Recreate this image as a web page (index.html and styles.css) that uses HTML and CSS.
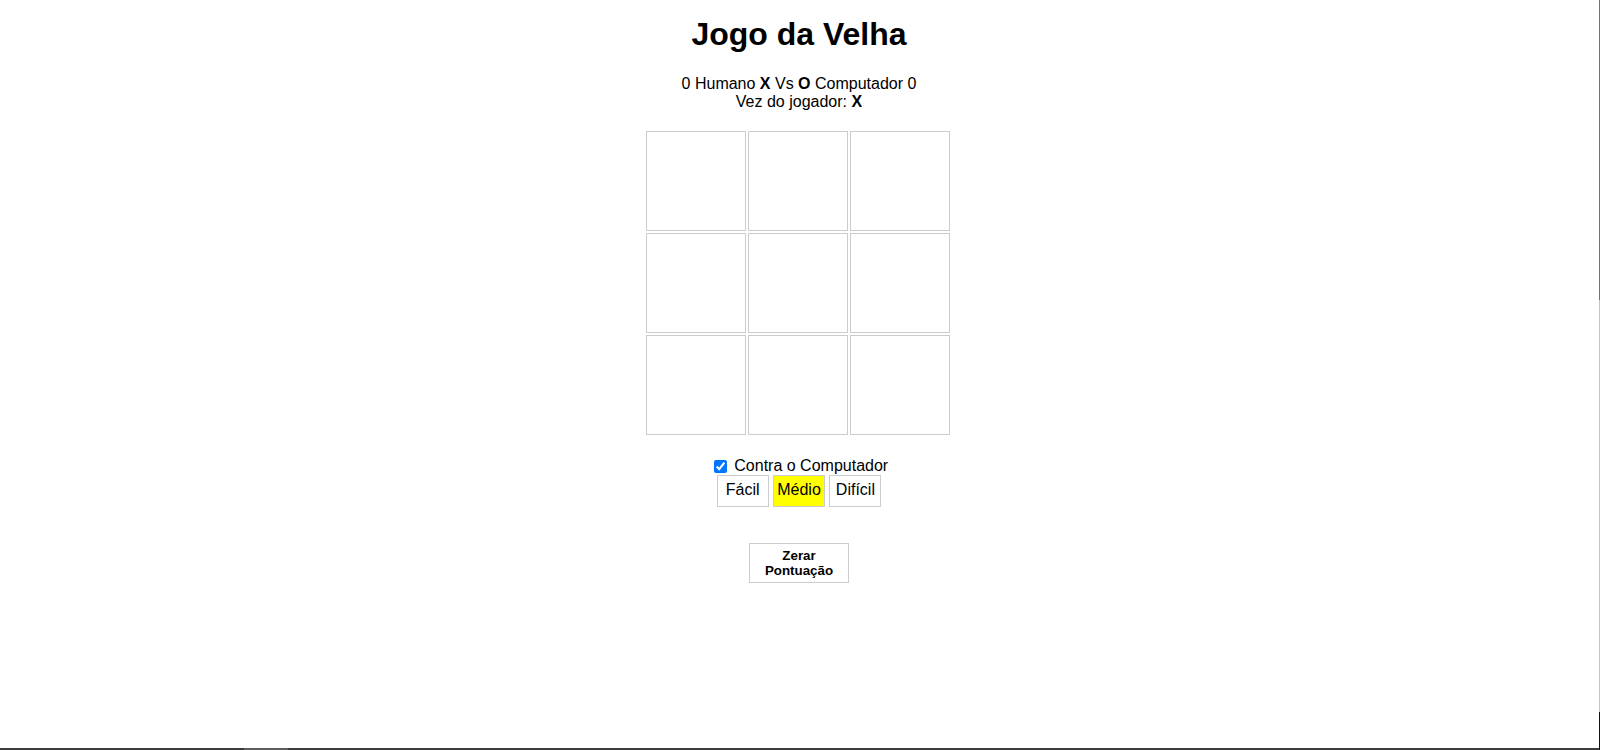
FILE: index.html
```html
<!DOCTYPE html>
<html lang="pt-BR">
<head>
<meta charset="utf-8">
<title>Jogo da Velha</title>
<link rel="stylesheet" href="styles.css">
</head>
<body>
<main class="game">
  <h1 class="title">Jogo da Velha</h1>
  <div class="score">
    <div>0 Humano <b>X</b> Vs <b>O</b> Computador 0</div>
    <div>Vez do jogador: <b>X</b></div>
  </div>
  <div class="board">
    <div class="cell"></div><div class="cell"></div><div class="cell"></div>
    <div class="cell"></div><div class="cell"></div><div class="cell"></div>
    <div class="cell"></div><div class="cell"></div><div class="cell"></div>
  </div>
  <label class="mode"><input type="checkbox" class="mode-check" checked> Contra o Computador</label>
  <div class="levels">
    <button class="level">Fácil</button>
    <button class="level level-active">Médio</button>
    <button class="level">Difícil</button>
  </div>
  <button class="reset">Zerar Pontuação</button>
</main>
<div class="frame-bottom"></div>
<div class="frame-right"></div>
</body>
</html>
```
FILE: styles.css
```css
html, body {
  margin: 0;
  padding: 0;
  background: #fff;
}
body {
  font-family: "Liberation Sans", Arial, sans-serif;
  font-size: 16px;
  color: #000;
  padding-right: 2px;
  height: 750px;
  overflow: hidden;
}
.game {
  display: flex;
  flex-direction: column;
  align-items: center;
}
.title {
  font-size: 32px;
  font-weight: bold;
  margin: 16px 0 22px;
  line-height: 36.8px;
}
.score {
  text-align: center;
  line-height: 18.4px;
}
.board {
  margin-top: 19px;
  display: grid;
  grid-template-columns: repeat(3, 100px);
  grid-auto-rows: 100px;
  gap: 2px;
  margin-right: 2px;
}
.cell {
  box-sizing: border-box;
  border: 1px solid #cccccc;
  background: #fff;
}
.mode {
  margin-top: 22px;
  line-height: 18.4px;
  display: block;
}
.mode-check {
  width: 13px;
  height: 13px;
  margin: 3px 3px 3px 4px;
  vertical-align: -2px;
  accent-color: #0075ff;
}
.levels {
  margin-top: -0.5px;
  display: flex;
  gap: 4.4px;
}
.level {
  box-sizing: border-box;
  width: 52px;
  height: 32px;
  padding: 0;
  border: 1px solid #cccccc;
  background: #fff;
  font-family: "Liberation Sans", Arial, sans-serif;
  font-size: 16px;
  color: #000;
  padding-bottom: 3px;
}
.level-active {
  background: #ffff00;
}
.reset {
  margin-top: 36px;
  box-sizing: border-box;
  width: 100px;
  height: 40px;
  padding: 4px 6px;
  border: 1px solid #cccccc;
  background: #fff;
  font-family: "Liberation Sans", Arial, sans-serif;
  font-size: 13.333px;
  font-weight: bold;
  color: #000;
  line-height: 15.3px;
}
.frame-bottom {
  position: fixed;
  left: 0;
  right: 0;
  bottom: 0;
  height: 2px;
  background: linear-gradient(to right, #3c3c3c 0, #3c3c3c 244px, #5e5e5e 244px, #5e5e5e 288px, #3c3c3c 288px);
}
.frame-right {
  position: fixed;
  top: 0;
  right: 0;
  bottom: 0;
  width: 1px;
  background: linear-gradient(to bottom, #3a7bd5 0, #3a7bd5 40%, #d9b7cf 40%, #d9b7cf 95%, #111 95%);
}
```
